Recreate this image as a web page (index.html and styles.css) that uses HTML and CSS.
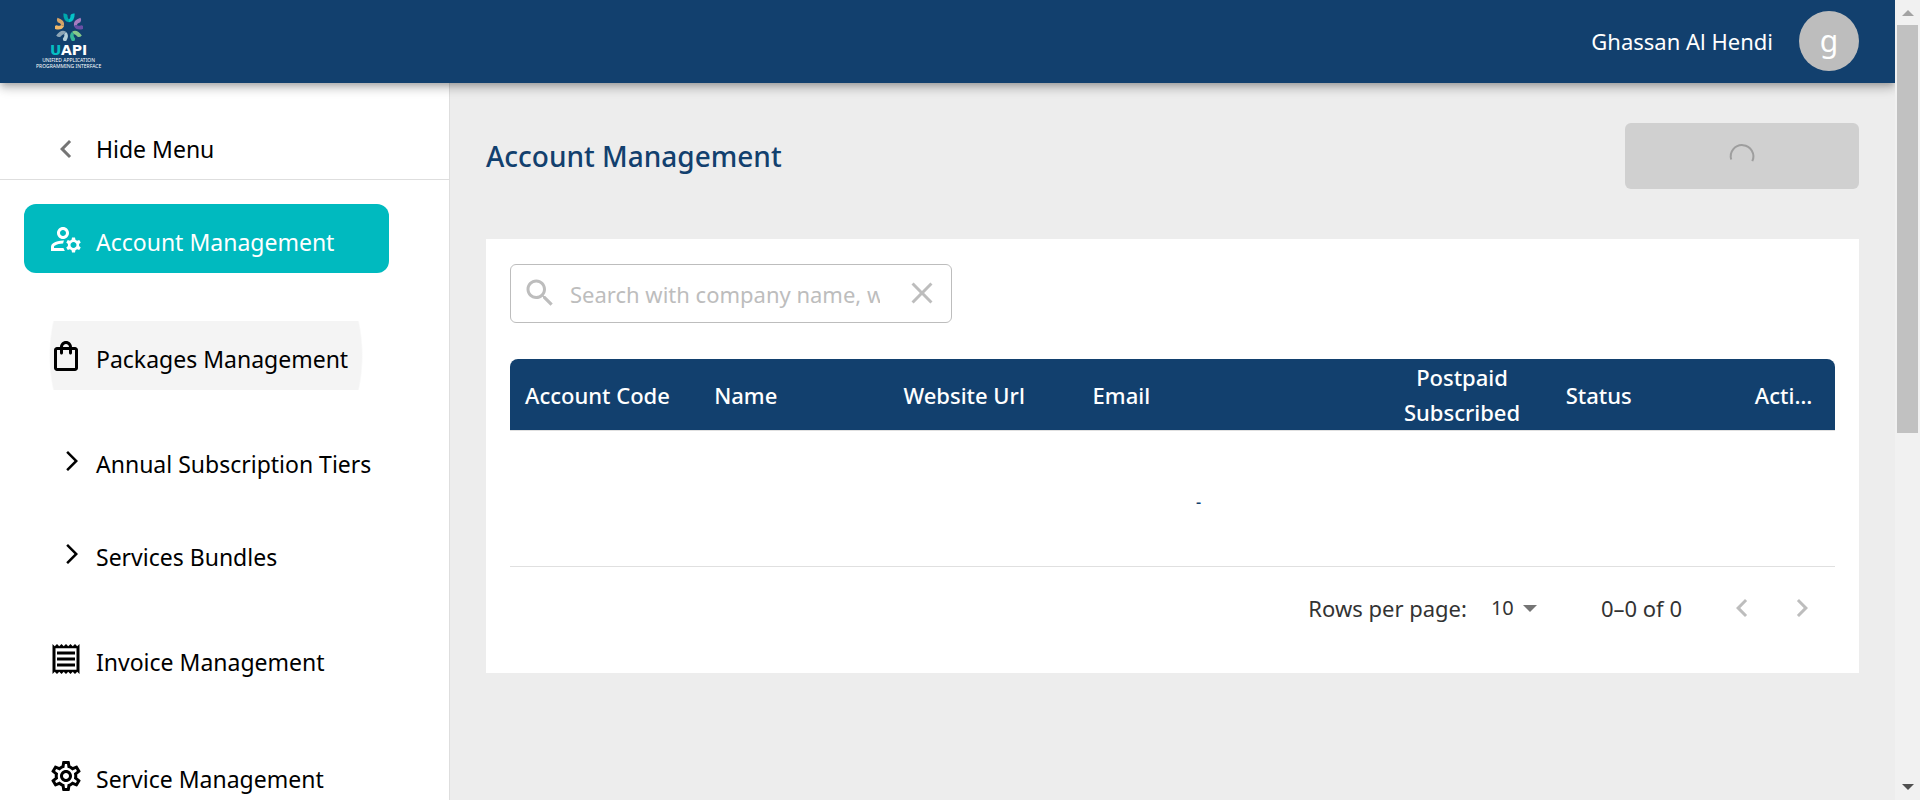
FILE: index.html
```html
<!DOCTYPE html>
<html lang="en">
<head>
<meta charset="utf-8">
<title>Account Management</title>
<link rel="stylesheet" href="styles.css">
</head>
<body>
<div class="shell">
  <div class="app">
    <header class="topbar">
      <a class="brand" href="#">
        <svg class="brand-mark" viewBox="0 0 54 54" aria-hidden="true">
          <g><path d="M16 1q6-1 8 3q0 7 3 8v6q-11-1-11-17z" fill="#00a9ad"/><path d="M38 1q-6-1-8 3q0 7-3 8v6q11-1 11-17z" fill="#05c3c7"/></g>
          <g transform="rotate(72 27 28)"><path d="M16 1q6-1 8 3q0 7 3 8v6q-11-1-11-17z" fill="#a67cc0"/><path d="M38 1q-6-1-8 3q0 7-3 8v6q11-1 11-17z" fill="#6a4fa5"/></g>
          <g transform="rotate(144 27 28)"><path d="M16 1q6-1 8 3q0 7 3 8v6q-11-1-11-17z" fill="#85c98a"/><path d="M38 1q-6-1-8 3q0 7-3 8v6q11-1 11-17z" fill="#35b89a"/></g>
          <g transform="rotate(216 27 28)"><path d="M16 1q6-1 8 3q0 7 3 8v6q-11-1-11-17z" fill="#b4cdd8"/><path d="M38 1q-6-1-8 3q0 7-3 8v6q11-1 11-17z" fill="#8ea5b5"/></g>
          <g transform="rotate(288 27 28)"><path d="M16 1q6-1 8 3q0 7 3 8v6q-11-1-11-17z" fill="#f0b768"/><path d="M38 1q-6-1-8 3q0 7-3 8v6q11-1 11-17z" fill="#d5a468"/></g>
        </svg>
        <span class="brand-name"><span class="brand-u">U</span>API</span>
        <span class="brand-tag">UNIFIED APPLICATION<br>PROGRAMMING INTERFACE</span>
      </a>
      <div class="user">
        <span class="user-name">Ghassan Al Hendi</span>
        <span class="avatar">g</span>
      </div>
    </header>
    <div class="body">
      <nav class="sidebar">
        <button class="hide-menu" type="button">
          <svg class="icon" viewBox="0 0 24 24"><path d="M15.41 7.41 14 6l-6 6 6 6 1.41-1.41L10.83 12z"/></svg>
          <span class="nav-label">Hide Menu</span>
        </button>
        <div class="nav-list">
          <a class="nav-item active" href="#">
            <svg class="icon" viewBox="0 0 24 24"><path d="M4 18v-.65c0-.34.16-.66.41-.81C6.1 15.53 8.03 15 10 15c.03 0 .05 0 .08.01.1-.7.3-1.37.59-1.98-.22-.02-.44-.03-.67-.03-2.42 0-4.68.67-6.61 1.82-.88.52-1.39 1.5-1.39 2.53V20h9.26c-.42-.6-.75-1.28-.97-2zM10 12c2.21 0 4-1.79 4-4s-1.79-4-4-4-4 1.79-4 4 1.790 4 4 4m0-6c1.100 0 2 .9 2 2s-.9 2-2 2-2-.9-2-2 .9-2 2-2m10.750 10c0-.22-.03-.42-.06-.63l1.140-1.010-1-1.730-1.450.49c-.32-.27-.68-.48-1.080-.63L18 11h-2l-.3 1.490c-.4.15-.76.36-1.080.63l-1.450-.49-1 1.730 1.140 1.010c-.03.21-.06.41-.06.63s.03.42.06.63l-1.140 1.010 1 1.730 1.450-.49c.32.27.68.48 1.080.63L16 21h2l.3-1.490c.4-.15.76-.36 1.080-.63l1.450.49 1-1.730-1.140-1.010c.03-.21.06-.41.06-.63M17 18c-1.100 0-2-.9-2-2s.9-2 2-2 2 .9 2 2-.9 2-2 2"/></svg>
            <span class="nav-label">Account Management</span>
          </a>
          <a class="nav-item hovered" href="#">
            <svg class="icon" viewBox="0 0 24 24"><path d="M18 6h-2c0-2.210-1.790-4-4-4S8 3.790 8 6H6c-1.100 0-2 .9-2 2v12c0 1.100.9 2 2 2h12c1.100 0 2-.9 2-2V8c0-1.100-.9-2-2-2m-6-2c1.100 0 2 .9 2 2h-4c0-1.100.9-2 2-2m6 16H6V8h2v2c0 .55.45 1 1 1s1-.45 1-1V8h4v2c0 .55.45 1 1 1s1-.45 1-1V8h2z"/></svg>
            <span class="nav-label">Packages Management</span>
          </a>
          <a class="nav-item group" href="#">
            <svg class="icon" viewBox="0 0 24 24"><path d="M6.230 20.230 8 22l10-10L8 2 6.230 3.770 14.460 12z"/></svg>
            <span class="nav-label">Annual Subscription Tiers</span>
          </a>
          <a class="nav-item group" href="#">
            <svg class="icon" viewBox="0 0 24 24"><path d="M6.230 20.230 8 22l10-10L8 2 6.230 3.770 14.460 12z"/></svg>
            <span class="nav-label">Services Bundles</span>
          </a>
          <a class="nav-item" href="#">
            <svg class="icon" viewBox="0 0 24 24"><path d="M19.500 3.500 18 2l-1.500 1.500L15 2l-1.500 1.500L12 2l-1.500 1.500L9 2 7.500 3.500 6 2 4.500 3.500 3 2v20l1.500-1.500L6 22l1.500-1.500L9 22l1.500-1.500L12 22l1.500-1.500L15 22l1.500-1.500L18 22l1.500-1.500L21 22V2zM19 19.090H5V4.910h14zM6 15h12v2H6zm0-4h12v2H6zm0-4h12v2H6z"/></svg>
            <span class="nav-label">Invoice Management</span>
          </a>
          <a class="nav-item" href="#">
            <svg class="icon" viewBox="0 0 24 24"><path d="M19.430 12.980c.04-.32.07-.64.07-.98s-.03-.66-.07-.98l2.110-1.650c.19-.15.24-.42.12-.64l-2-3.460c-.09-.16-.26-.25-.44-.25-.06 0-.12.010-.17.03l-2.490 1c-.52-.4-1.080-.73-1.690-.98l-.38-2.650C14.460 2.180 14.250 2 14 2h-4c-.25 0-.46.18-.49.42l-.38 2.650c-.61.25-1.170.59-1.690.98l-2.490-1c-.06-.02-.12-.03-.18-.03-.17 0-.34.09-.43.25l-2 3.460c-.13.22-.07.49.12.64l2.110 1.650c-.04.32-.07.65-.07.98s.03.66.07.98l-2.110 1.650c-.19.15-.24.42-.12.64l2 3.460c.09.16.26.25.44.25.06 0 .12-.01.17-.03l2.490-1c.52.4 1.080.73 1.690.98l.38 2.650c.03.24.24.42.49.42h4c.25 0 .46-.18.49-.42l.38-2.650c.61-.25 1.170-.59 1.690-.98l2.490 1c.06.02.12.03.18.03.17 0 .34-.09.43-.25l2-3.460c.12-.22.07-.49-.12-.64zm-1.980-1.710c.04.31.05.52.05.73s-.02.43-.05.73l-.14 1.130.89.7 1.080.84-.7 1.210-1.270-.51-1.040-.42-.9.68c-.43.32-.84.56-1.250.73l-1.060.43-.16 1.130-.2 1.350h-1.400l-.19-1.350-.16-1.130-1.060-.43c-.43-.18-.83-.41-1.230-.71l-.91-.7-1.060.43-1.270.51-.7-1.210 1.080-.84.89-.7-.14-1.130c-.03-.31-.05-.54-.05-.74s.02-.43.05-.73l.14-1.130-.89-.7-1.080-.84.7-1.210 1.270.51 1.040.42.9-.68c.43-.32.84-.56 1.250-.73l1.060-.43.16-1.130.2-1.350h1.390l.19 1.350.16 1.130 1.060.43c.43.18.83.41 1.230.71l.91.7 1.060-.43 1.270-.51.7 1.210-1.070.85-.89.7zM12 8c-2.210 0-4 1.790-4 4s1.790 4 4 4 4-1.790 4-4-1.790-4-4-4m0 6c-1.100 0-2-.9-2-2s.9-2 2-2 2 .9 2 2-.9 2-2 2"/></svg>
            <span class="nav-label">Service Management</span>
          </a>
        </div>
      </nav>
      <main class="main">
        <div class="page-head">
          <h1 class="title">Account Management</h1>
          <button class="loading-btn" type="button" disabled aria-label="Loading">
            <svg class="spinner" viewBox="0 0 28 28"><path d="M3.200 17.500A11.300 11.300 0 1 1 24.300 19.200" fill="none" stroke="#9e9e9e" stroke-width="2"/></svg>
          </button>
        </div>
        <section class="card">
          <div class="search">
            <svg class="icon" viewBox="0 0 24 24"><path d="M15.500 14h-.79l-.28-.27C15.410 12.590 16 11.110 16 9.500 16 5.910 13.090 3 9.500 3S3 5.910 3 9.500 5.910 16 9.500 16c1.610 0 3.090-.59 4.230-1.570l.27.28v.79l5 4.990L20.490 19zm-6 0C7.010 14 5 11.990 5 9.500S7.010 5 9.500 5 14 7.010 14 9.500 11.990 14 9.500 14"/></svg>
            <input class="search-input" type="text" aria-label="Search" placeholder="Search with company name, website url">
            <button class="icon-btn" type="button" aria-label="Clear">
              <svg class="icon" viewBox="0 0 24 24"><path d="M19 6.410 17.590 5 12 10.590 6.410 5 5 6.410 10.590 12 5 17.590 6.410 19 12 13.410 17.590 19 19 17.590 13.410 12z"/></svg>
            </button>
          </div>
          <table class="grid">
            <colgroup><col class="c-std"><col class="c-std"><col class="c-std"><col class="c-wide"><col class="c-std"><col class="c-std"><col></colgroup>
            <thead>
              <tr><th>Account Code</th><th>Name</th><th>Website Url</th><th>Email</th><th class="center">Postpaid Subscribed</th><th>Status</th><th>Actions</th></tr>
            </thead>
            <tbody>
              <tr><td class="empty" colspan="7">-</td></tr>
            </tbody>
          </table>
          <div class="pager">
            <label for="rows">Rows per page:</label>
            <span class="select-wrap"><select id="rows" class="rows"><option>10</option></select></span>
            <span class="range">0–0 of 0</span>
            <div class="pager-nav">
              <button class="icon-btn" type="button" disabled aria-label="Previous page"><svg class="icon" viewBox="0 0 24 24"><path d="M15.410 7.410 14 6l-6 6 6 6 1.410-1.410L10.830 12z"/></svg></button>
              <button class="icon-btn" type="button" disabled aria-label="Next page"><svg class="icon" viewBox="0 0 24 24"><path d="M10 6 8.590 7.410 13.170 12l-4.580 4.590L10 18l6-6z"/></svg></button>
            </div>
          </div>
        </section>
      </main>
    </div>
  </div>
  <div class="scrollbar" aria-hidden="true">
    <span class="arrow up"></span>
    <span class="thumb"></span>
    <span class="arrow down"></span>
  </div>
</div>
</body>
</html>
```

FILE: styles.css
```css
* { box-sizing: border-box; }

body {
  margin: 0;
  font-family: "Noto Sans", "Open Sans", sans-serif;
  font-size: 22px;
  line-height: 36px;
  color: #000;
  background: #ededed;
}

button, input, select { font: inherit; color: inherit; }
button { border: 0; padding: 0; background: none; }

.icon {
  display: block;
  flex: none;
  width: 36px;
  height: 36px;
  fill: currentColor;
}

.shell {
  display: grid;
  grid-template-columns: minmax(0, 1fr) 25px;
  height: 100vh;
  overflow: hidden;
}

.app {
  display: flex;
  flex-direction: column;
  min-width: 0;
  overflow: hidden;
}

/* Top bar */
.topbar {
  position: relative;
  z-index: 1;
  flex: none;
  display: flex;
  align-items: center;
  justify-content: space-between;
  padding: 11px 36px 12px;
  background: #12406e;
  box-shadow: 0 3px 6px -2px rgba(0, 0, 0, .2), 0 6px 8px rgba(0, 0, 0, .14), 0 2px 15px rgba(0, 0, 0, .12);
}

.brand {
  display: flex;
  flex-direction: column;
  align-items: center;
  color: #fff;
  text-decoration: none;
}
.brand-mark { width: 28px; height: 28px; }
.brand-name {
  padding-top: 2px;
  font: bold 14px/14px "DejaVu Sans", sans-serif;
}
.brand-u { color: #05bfc3; }
.brand-tag {
  font-size: 5px;
  line-height: 6px;
  text-align: center;
}

.user { display: flex; align-items: center; gap: 26px; color: #fff; }
.avatar {
  display: grid;
  place-items: center;
  width: 60px;
  height: 60px;
  border-radius: 50%;
  background: #bdbdbd;
  font-size: 30px;
}

.body { flex: 1; display: flex; min-height: 0; }

/* Side navigation */
.sidebar {
  flex: none;
  width: 450px;
  border-right: 1px solid #dedede;
  background: #fff;
  overflow: hidden;
}
.nav-label { font-size: 23px; }
.hide-menu {
  display: flex;
  align-items: center;
  gap: 12px;
  width: 100%;
  padding: 48px 48px 12px;
  border-bottom: 1px solid #dedede;
  text-align: left;
}
.hide-menu .icon { color: #757575; }

.nav-list {
  display: flex;
  flex-direction: column;
  gap: 48px;
  padding: 24px;
}
.nav-item {
  display: flex;
  align-items: center;
  gap: 12px;
  width: 365px;
  height: 69px;
  padding-left: 24px;
  color: #000;
  text-decoration: none;
  white-space: nowrap;
}
.nav-item .nav-label { padding-top: 6px; }
.nav-item.active {
  border-radius: 12px;
  background: #00babf;
  color: #fff;
}
.nav-item.hovered {
  background: radial-gradient(ellipse 157px 160px at 182px 50%, #f4f4f4 99%, transparent 100%);
}
.nav-item.group { height: 45px; padding-left: 36px; }
.nav-item.group .icon { width: 24px; height: 24px; }

/* Main area */
.main {
  flex: 1;
  min-width: 0;
  padding: 40px 36px;
}
.page-head {
  display: flex;
  align-items: flex-start;
  justify-content: space-between;
  margin-bottom: 50px;
}
.title {
  margin: 0;
  padding-top: 11px;
  font-size: 28px;
  font-weight: 500;
  line-height: 44px;
  color: #12406e;
}
.loading-btn {
  display: flex;
  justify-content: center;
  width: 234px;
  height: 66px;
  padding-top: 19px;
  border-radius: 6px;
  background: #d0d0d0;
}
.spinner { width: 28px; height: 28px; }

.card { padding: 25px 24px 36px; background: #fff; }

.search {
  display: flex;
  align-items: center;
  width: 442px;
  height: 59px;
  margin-bottom: 36px;
  padding: 0 11px 2px;
  border: 1px solid #bdbdbd;
  border-radius: 6px;
  color: #bdbdbd;
}
.search-input {
  flex: 1;
  min-width: 0;
  margin: 0 24px 0 12px;
  padding: 3px 0 0;
  border: 0;
  outline: 0;
  background: none;
}
.search-input::placeholder { color: #bdbdbd; opacity: 1; }

.grid {
  width: 100%;
  table-layout: fixed;
  border-collapse: separate;
  border-spacing: 0;
}
.c-std { width: 14.28%; }
.c-wide { width: 21.42%; }
.grid th {
  height: 72px;
  padding: 1px 15px 0;
  overflow: hidden;
  border-bottom: 1px solid #e0e0e0;
  background: #12406e;
  color: #fff;
  font-weight: 500;
  line-height: 35px;
  text-align: left;
  text-overflow: ellipsis;
  white-space: nowrap;
}
.grid th.center { padding: 0 20px 0 32px; text-align: center; white-space: normal; }
.grid th:first-child { border-top-left-radius: 8px; }
.grid th:last-child { border-top-right-radius: 8px; }
.empty {
  height: 136px;
  padding: 6px 0 0 52px;
  border-bottom: 1px solid #e0e0e0;
  font-size: 16px;
  font-weight: 500;
  text-align: center;
  color: #12406e;
}

.pager {
  display: flex;
  align-items: center;
  justify-content: flex-end;
  padding: 23px 15px 11px 0;
  color: #333;
}
.select-wrap { display: flex; align-items: center; margin: 0 64px 0 24px; }
.select-wrap::after {
  content: "";
  border: 7px solid transparent;
  border-top-color: #757575;
  border-bottom: 0;
}
.rows {
  width: 32px;
  padding: 0;
  border: 0;
  outline: 0;
  appearance: none;
  background: none;
  font-size: 20px;
}
.pager-nav { display: flex; gap: 24px; margin-left: 42px; }
.pager .icon-btn { color: #bdbdbd; }

/* Window scroll bar */
.scrollbar {
  display: flex;
  flex-direction: column;
  align-items: center;
  padding: 10px 0;
  background: #f1f1f1;
}
.thumb { width: 21px; height: 51vh; margin-top: 9px; background: #c1c1c1; }
.arrow { border: 6px solid transparent; }
.arrow.up { border-top: 0; border-bottom-color: #a3a3a3; }
.arrow.down { margin-top: auto; border-bottom: 0; border-top-color: #505050; }
```
